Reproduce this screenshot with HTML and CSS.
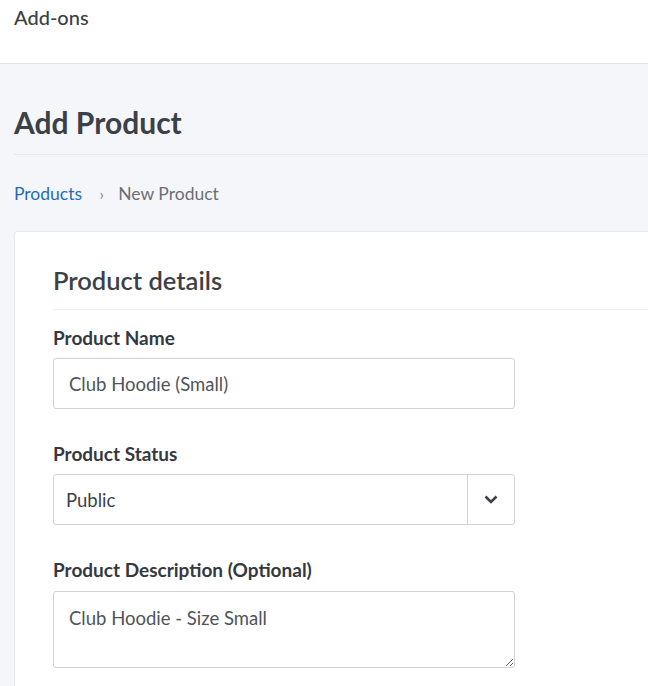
FILE: index.html
```html
<!DOCTYPE html>
<html lang="en">
    <head>
        <meta charset="UTF-8">
        <title>Add Product</title>
        <link rel="stylesheet" href="styles.css">
    </head>
    <body>
        <!-- Top bar -->
        <div id="top-bar">
            <span id="top-title">Add-ons</span>
        </div>

        <div id="main">
            <h1 id="page-title">Add Product</h1>

            <div id="crumbs">
                <a href="#">Products</a>
                <span class="crumb-sep">&rsaquo;</span>
                <span class="crumb-here">New Product</span>
            </div>

            <div class="card">
                <h2 class="card-title">Product details</h2>

                <div class="field">
                    <label class="field-label" for="prod-name">Product Name</label>
                    <input id="prod-name" class="text-input" type="text" value="Club Hoodie (Small)">
                </div>

                <div class="field">
                    <label class="field-label" for="prod-status">Product Status</label>
                    <div class="select-box">
                        <select id="prod-status">
                            <option>Public</option>
                            <option>Private</option>
                        </select>
                        <span class="select-arrow">
                            <svg width="14" height="9" viewBox="0 0 14 9"><path d="M1.5 1.5 L7 7 L12.5 1.5" fill="none" stroke="#3d4147" stroke-width="2.6"/></svg>
                        </span>
                    </div>
                </div>

                <div class="field">
                    <label class="field-label" for="prod-desc">Product Description (Optional)</label>
                    <textarea id="prod-desc" class="text-area">Club Hoodie - Size Small</textarea>
                </div>
            </div>
        </div>
    </body>
</html>
```

FILE: styles.css
```css
* {
    margin: 0;
    padding: 0;
    box-sizing: border-box;
}

body {
    font-family: 'Lato', 'Liberation Sans', sans-serif;
    color: #3d4147;
    background-color: #f5f6fa;
    overflow: hidden;
}

#top-bar {
    height: 64px;
    padding: 5px 14px 0px 14px;
    background-color: white;
    border-bottom: 1px solid #e4e6ea;
}

#top-title {
    font-size: 20px;
    line-height: 24px;
    font-weight: 500;
    color: #3a3f45;
}

#main {
    padding: 41px 0px 40px 14px;
}

#page-title {
    font-size: 30px;
    line-height: 35px;
    font-weight: 700;
    color: #3d4147;
    padding-bottom: 14px;
    border-bottom: 1px solid #e6e8ec;
}

#crumbs {
    margin-top: 27px;
    font-size: 17.5px;
    line-height: 24px;
}

#crumbs a {
    text-decoration: none;
    color: #1f6db8;
}

.crumb-sep {
    margin: 0px 10px 0px 13px;
    color: #777b80;
    font-size: 15px;
}

.crumb-here {
    color: #6a6e74;
}

.card {
    margin-top: 25px;
    padding: 33px 0px 30px 38px;
    background-color: white;
    border: 1px solid #e8eaee;
    border-right: none;
    border-radius: 4px 0px 0px 4px;
}

.card-title {
    font-size: 25.5px;
    line-height: 30px;
    font-weight: 600;
    color: #3d4147;
    padding-bottom: 14px;
    margin-bottom: 14px;
    border-bottom: 1px solid #eef0f2;
}

.field {
    margin-bottom: 31px;
}

.field-label {
    display: block;
    font-size: 19px;
    line-height: 27px;
    font-weight: 700;
    color: #35393f;
    margin-bottom: 7px;
}

.text-input, .text-area, .select-box {
    width: 462px;
    border: 1px solid #cfd1d4;
    border-radius: 3px;
    background-color: white;
    font-family: 'Lato', 'Liberation Sans', sans-serif;
    font-size: 18.5px;
    color: #505459;
}

.text-input {
    display: block;
    height: 51px;
    padding: 0px 15px;
}

.text-input:focus, .text-area:focus, select:focus {
    outline: none;
}

.select-box {
    display: flex;
    height: 51px;
}

.select-box select {
    flex: 1;
    appearance: none;
    -webkit-appearance: none;
    border: none;
    background: transparent;
    padding-left: 12px;
    font-family: inherit;
    font-size: 18.5px;
    color: #3d4147;
}

.select-arrow {
    display: flex;
    align-items: center;
    justify-content: center;
    width: 47px;
    border-left: 1px solid #cfd1d4;
}

.text-area {
    display: block;
    height: 77px;
    margin-top: 8px;
    padding: 13px 15px;
    line-height: 27px;
    resize: vertical;
}
```
